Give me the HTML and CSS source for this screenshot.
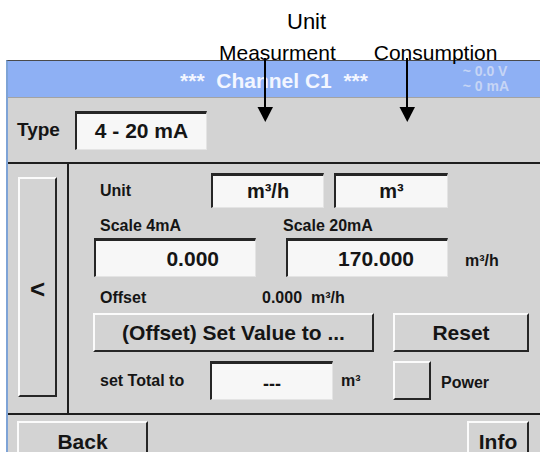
FILE: index.html
```html
<!DOCTYPE html>
<html>
<head>
  <title>Channel C1 - Settings</title>
  <link rel="stylesheet" href="styles.css">
</head>
<body>

  <div class="notes">
    <div class="note-title">Unit</div>
    <div class="note-row">
      <span class="note-meas">Measurment</span>
      <span class="note-cons">Consumption</span>
    </div>
  </div>

  <div class="screen">
    <div class="head">
      <span></span>
      <span class="title">***&nbsp; Channel C1 &nbsp;***</span>
      <span class="readout">~ 0.0 V<br>~ 0 mA</span>
    </div>

    <div class="type-row">
      <span class="type-label">Type</span>
      <div class="field type-field">4 - 20 mA</div>
    </div>

    <div class="middle">
      <div class="side">
        <div class="btn back-arrow">&lt;</div>
      </div>
      <div class="panel">
        <div class="row row-unit">
          <span class="lbl lbl-unit">Unit</span>
          <div class="field unit-a">m³/h</div>
          <div class="field unit-b">m³</div>
        </div>
        <div class="row row-scale-lbl">
          <span class="lbl scale-4">Scale 4mA</span>
          <span class="lbl">Scale 20mA</span>
        </div>
        <div class="row row-scale">
          <div class="field scale">0.000</div>
          <div class="field scale scale-20">170.000</div>
          <span class="lbl unit-side">m³/h</span>
        </div>
        <div class="row row-offset">
          <span class="lbl offset-lbl">Offset</span>
          <span class="lbl">0.000&nbsp;&nbsp;m³/h</span>
        </div>
        <div class="row row-btns">
          <div class="btn wide">(Offset) Set Value to ...</div>
          <div class="btn reset">Reset</div>
        </div>
        <div class="row row-total">
          <span class="lbl total-lbl">set Total to</span>
          <div class="field total">---</div>
          <span class="lbl m3">m³</span>
          <div class="btn check"></div>
          <span class="lbl power">Power</span>
        </div>
      </div>
    </div>

    <div class="foot">
      <div class="btn back">Back</div>
      <div class="btn info">Info</div>
    </div>
  </div>

  <!-- callout arrows drawn over the screen -->
  <svg class="arrows" width="540" height="452" viewBox="0 0 540 452">
    <line x1="265" y1="58" x2="265" y2="110" stroke="#000" stroke-width="2"/>
    <polygon points="257.5,107 273,107 265.3,122" fill="#000"/>
    <line x1="407" y1="58" x2="407" y2="110" stroke="#000" stroke-width="2"/>
    <polygon points="399.5,107 415,107 407.3,122" fill="#000"/>
  </svg>

</body>
</html>
```

FILE: styles.css
```css
body {
  margin: 0;
  width: 540px;
  height: 452px;
  overflow: hidden;
  position: relative;
  background: #fff;
  font-family: "Liberation Sans", Arial, sans-serif;
  color: #151515;
}

/* callouts above the screen */
.notes {
  height: 60px;
  position: relative;
  z-index: 1;
  font-size: 21px;
  line-height: 24px;
  color: #000;
}
.note-title {
  padding: 10px 0 0 287px;
  font-size: 22px;
}
.note-row {
  display: flex;
  margin-top: 7px;
}
.note-meas {
  margin-left: 219px;
}
.note-cons {
  margin-left: 38px;
}
.arrows {
  position: absolute;
  top: 0;
  left: 0;
  pointer-events: none;
  z-index: 2;
}

/* device screen */
.screen {
  margin-left: 6px;
  height: 392px;
  border-left: 2px solid #7ea3d6;
  border-top: 1px solid #4a4a4a;
  background: #d3d3d3;
}
.head {
  height: 36px;
  display: grid;
  grid-template-columns: 1fr auto 1fr;
  align-items: center;
  background: #8eb0f4;
  border-bottom: 1px solid #a3a3a3;
}
.title {
  color: #f3f6ff;
  font-size: 21px;
  font-weight: bold;
  padding-top: 3px;
}
.readout {
  justify-self: end;
  padding-right: 31px;
  color: #c6d5f4;
  font-size: 14px;
  font-weight: bold;
  line-height: 15px;
}

.type-row {
  height: 64px;
  display: flex;
  align-items: center;
  padding-left: 9px;
}
.type-label {
  width: 58px;
  font-size: 19px;
  font-weight: bold;
}

/* input boxes and buttons */
.field {
  box-sizing: border-box;
  display: flex;
  align-items: center;
  justify-content: center;
  background: #f7f7f7;
  border-top: 3px solid #262626;
  border-left: 2px solid #262626;
  border-right: 1px solid #e4e4e4;
  border-bottom: 1px solid #e4e4e4;
  font-size: 21px;
  font-weight: bold;
}
.btn {
  box-sizing: border-box;
  display: flex;
  align-items: center;
  justify-content: center;
  background: #d3d3d3;
  border-top: 2px solid #fbfbfb;
  border-left: 2px solid #fbfbfb;
  border-right: 2px solid #262626;
  border-bottom: 2px solid #262626;
  font-size: 21px;
  font-weight: bold;
}
.lbl {
  font-size: 16px;
  font-weight: bold;
  line-height: 18px;
}

.type-field {
  width: 132px;
  height: 39px;
}

.middle {
  height: 249px;
  display: flex;
  border-top: 2px solid #1e1e1e;
  border-bottom: 2px solid #1e1e1e;
}
.side {
  width: 59px;
  border-right: 2px solid #1e1e1e;
}
.back-arrow {
  margin: 13px 0 0 10px;
  width: 39px;
  height: 220px;
  font-size: 26px;
  padding-top: 4px;
}
.panel {
  padding-left: 24px;
}
.row {
  display: flex;
  align-items: center;
}

.row-unit {
  margin-top: 9px;
  padding-left: 7px;
}
.lbl-unit {
  width: 111px;
}
.unit-a {
  width: 113px;
  height: 35px;
  font-size: 20px;
}
.unit-b {
  width: 114px;
  height: 35px;
  margin-left: 10px;
  font-size: 20px;
}

.row-scale-lbl {
  margin-top: 9px;
  padding-left: 7px;
}
.scale-4 {
  width: 183px;
}

.row-scale {
  margin-top: 3px;
  padding-left: 1px;
}
.scale {
  width: 162px;
  height: 39px;
  justify-content: flex-end;
  padding-right: 36px;
}
.scale-20 {
  margin-left: 30px;
  padding-right: 33px;
}
.unit-side {
  margin-left: 17px;
  margin-top: 6px;
}

.row-offset {
  margin-top: 12px;
  padding-left: 7px;
}
.offset-lbl {
  width: 162px;
}

.row-btns {
  margin-top: 6px;
}
.wide {
  width: 281px;
  height: 39px;
}
.reset {
  width: 136px;
  height: 39px;
  margin-left: 19px;
}

.row-total {
  margin-top: 9px;
  padding-left: 7px;
}
.total-lbl {
  width: 110px;
}
.total {
  width: 123px;
  height: 39px;
  font-size: 18px;
  padding-top: 5px;
}
.m3 {
  width: 52px;
  margin-left: 8px;
}
.check {
  width: 38px;
  height: 39px;
}
.power {
  margin-left: 10px;
  margin-top: 4px;
}

.foot {
  display: flex;
  justify-content: space-between;
  padding: 6px 11px 0 9px;
}
.foot .btn {
  height: 40px;
  border-bottom: none;
}
.back {
  width: 131px;
}
.info {
  width: 62px;
}
```
